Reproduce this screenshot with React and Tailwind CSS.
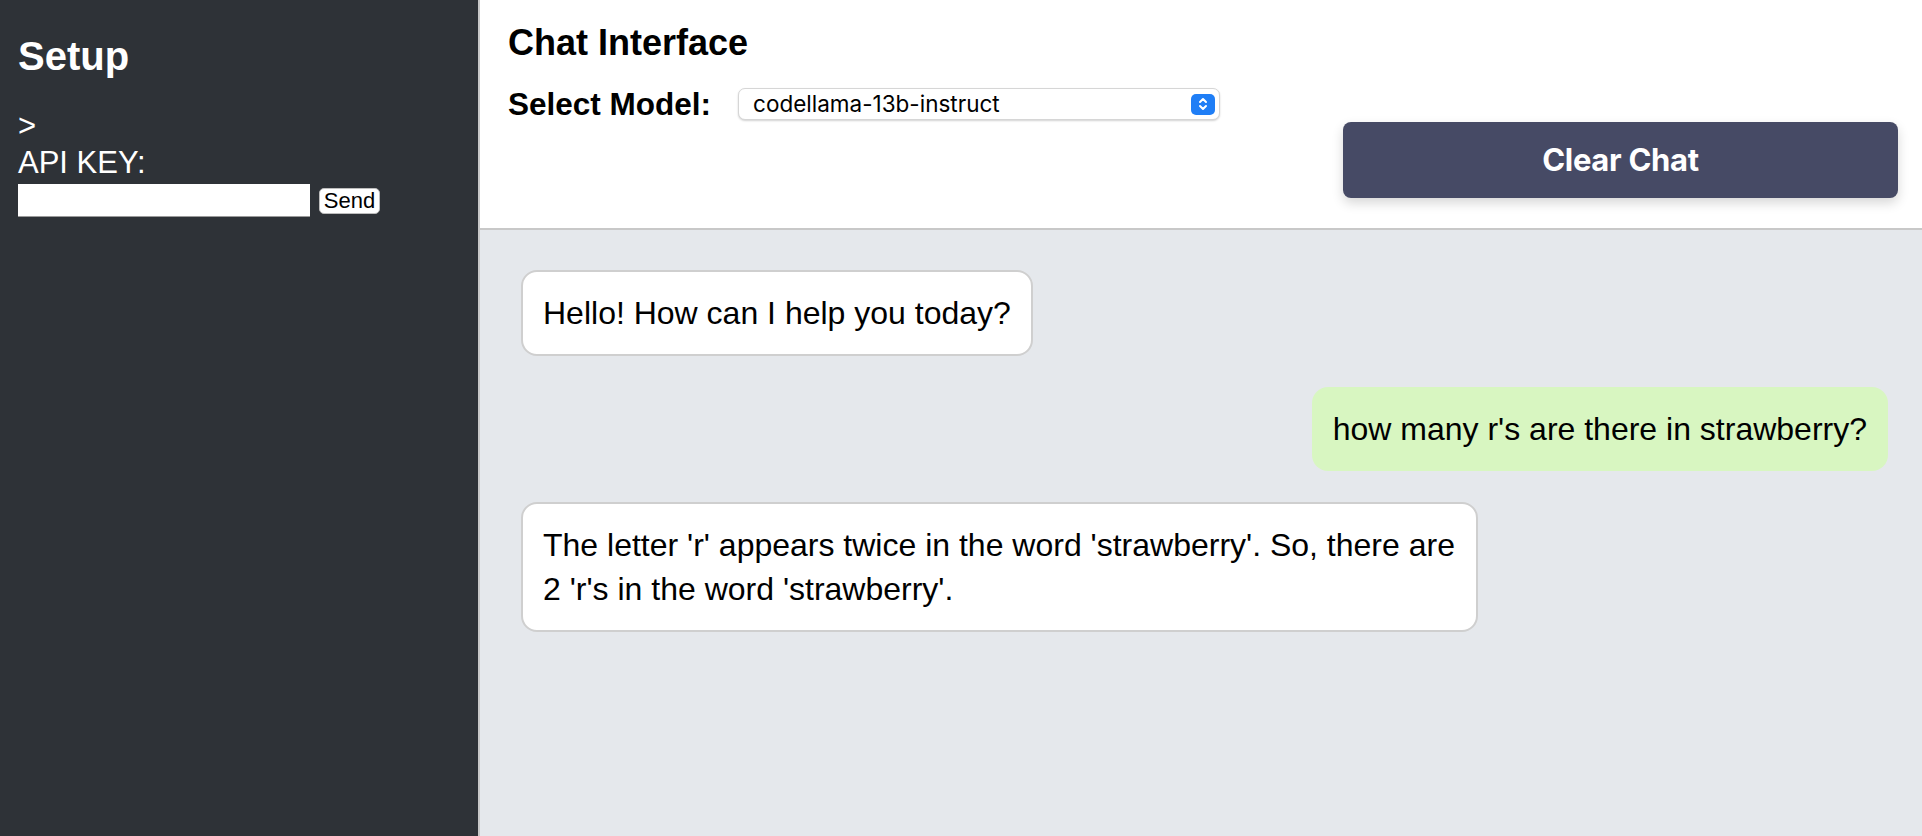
export default function App() {
  return (
    <div className="flex h-[836px] w-full overflow-hidden" style={{ fontFamily: '"Liberation Sans", Arial, sans-serif' }}>
      <aside className="w-[478px] shrink-0 bg-[#2e3237] px-[18px] pt-[33px] text-white">
        <h1 className="text-[40px] font-bold leading-[46px]">Setup</h1>
        <div className="mt-[28px] text-[31px] leading-[37px]">&gt;</div>
        <div className="text-[31px] leading-[37px]">API KEY:</div>
        <div className="mt-[3px] flex items-center gap-[9px]">
          <input className="h-[33px] w-[292px] border-b border-[#9a9a9a] bg-white px-1 text-[18px] text-black outline-none" />
          <button className="h-[26px] w-[61px] rounded-[5px] border border-[#bdbdbd] bg-white text-[22px] leading-[22px] text-black">Send</button>
        </div>
      </aside>
      <main className="flex flex-1 flex-col border-l-2 border-[#c8c8c8]">
        <header className="border-b-2 border-[#c8c8c8] bg-white pb-[30px] pl-[28px] pr-[24px] pt-[22px]">
          <h2 className="text-[36px] font-bold leading-[41px] text-black">Chat Interface</h2>
          <div className="mt-[23px] flex h-[36px] items-center">
            <span className="text-[31.5px] font-bold leading-[36px] text-black">Select Model:</span>
            <div className="ml-[27px] flex h-[32px] w-[482px] items-center justify-between rounded-[7px] border border-[#d6d6d6] bg-white pl-[14px] pr-[4px] shadow-[0_1px_2px_rgba(0,0,0,0.18)]">
              <span className="text-[22.5px] leading-[28px] text-black" style={{ fontFamily: 'Inter, "Liberation Sans", sans-serif' }}>codellama-13b-instruct</span>
              <span className="flex h-[21px] w-[24px] items-center justify-center rounded-[5px] bg-[#1f7ef6]">
                <svg width="12" height="16" viewBox="0 0 12 16" fill="none" stroke="white" strokeWidth="2" strokeLinecap="round" strokeLinejoin="round">
                  <path d="M3 6l3-3 3 3" />
                  <path d="M3 10l3 3 3-3" />
                </svg>
              </span>
            </div>
          </div>
          <div className="flex justify-end">
            <button
              className="h-[76px] w-[555px] rounded-[8px] bg-[#464a65] text-[31px] font-bold tracking-[-0.3px] text-white shadow-[0_5px_12px_rgba(0,0,0,0.16)]"
              style={{ fontFamily: 'Inter, "Liberation Sans", sans-serif' }}
            >
              Clear Chat
            </button>
          </div>
        </header>
        <section className="flex flex-1 flex-col gap-[31px] bg-[#e5e8ec] pl-[41px] pr-[34px] pt-[40px]">
          <div className="max-w-[70%] self-start rounded-[16px] border-2 border-[#cfcfcf] bg-white px-[20px] py-[19px] text-[32px] leading-[44px] text-black">
            Hello! How can I help you today?
          </div>
          <div className="max-w-[70%] self-end rounded-[16px] bg-[#d8f6c1] px-[21px] py-[20px] text-[32px] leading-[44px] text-black">
            how many r's are there in strawberry?
          </div>
          <div className="max-w-[70%] self-start rounded-[16px] border-2 border-[#cfcfcf] bg-white px-[20px] py-[19px] text-[32px] leading-[44px] text-black">
            The letter 'r' appears twice in the word 'strawberry'. So, there are 2 'r's in the word 'strawberry'.
          </div>
        </section>
      </main>
    </div>
  );
}
